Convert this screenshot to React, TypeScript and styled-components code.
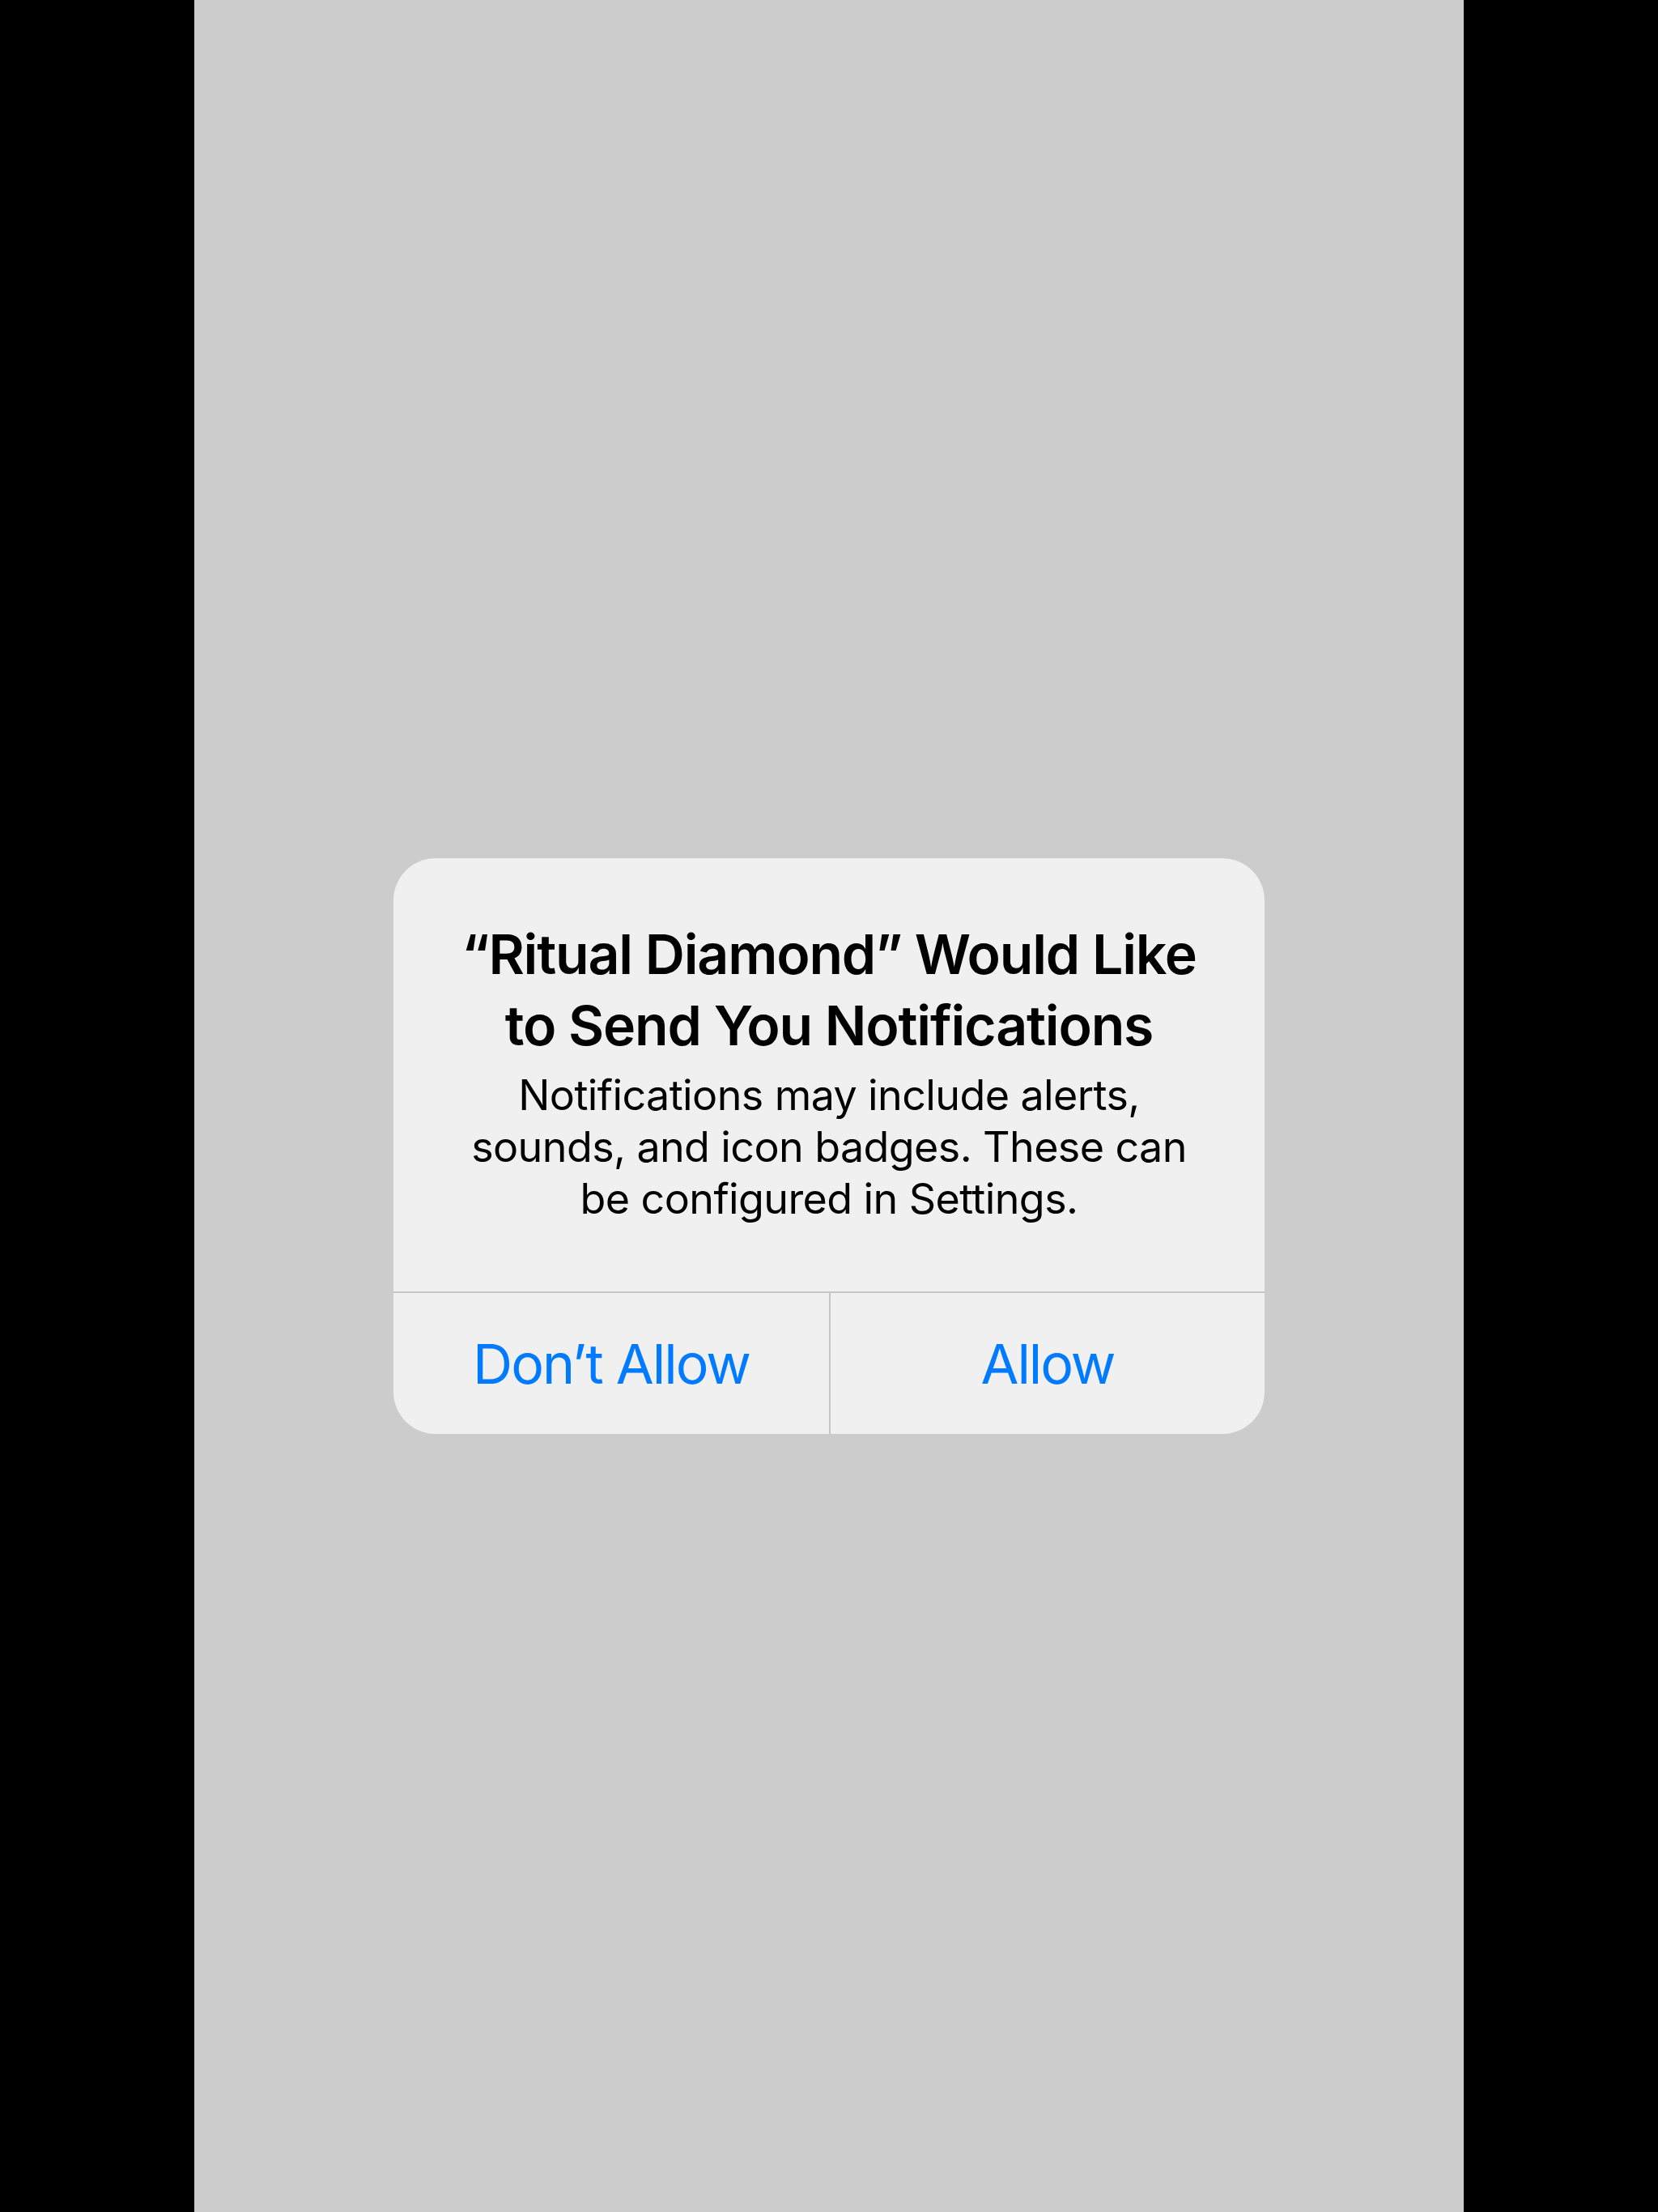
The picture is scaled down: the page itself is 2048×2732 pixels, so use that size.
import styled, { createGlobalStyle } from 'styled-components';

const GlobalStyle = createGlobalStyle`
	html, body {
		margin: 0;
		padding: 0;
		background: #000;
	}
	body {
		font-family: Inter, "Noto Sans", "Liberation Sans", sans-serif;
		-webkit-font-smoothing: antialiased;
	}
`;

const Frame = styled.div`
	width: 2048px;
	height: 2732px;
	background: #000;
	display: flex;
	justify-content: center;
`;

const Screen = styled.main`
	width: 1568px;
	height: 100%;
	box-sizing: border-box;
	padding-top: 99px;
	background: #cccccc;
	display: flex;
	align-items: center;
	justify-content: center;
`;

const Alert = styled.div`
	width: 1076px;
	background: #f0f0f0;
	border-radius: 52px;
	overflow: hidden;
	display: flex;
	flex-direction: column;
`;

const Content = styled.div`
	padding: 74px 40px 82px;
	display: flex;
	flex-direction: column;
	align-items: center;
	gap: 11px;
	text-align: center;
	color: #000;
`;

const Title = styled.h2`
	margin: 0;
	font-size: 68px;
	line-height: 88px;
	font-weight: 600;
	letter-spacing: -1.2px;
	white-space: nowrap;
`;

const Message = styled.p`
	margin: 0;
	font-size: 52px;
	line-height: 64px;
	font-weight: 400;
	letter-spacing: -0.6px;
	white-space: nowrap;
`;

const Actions = styled.div`
	display: grid;
	grid-template-columns: 1fr 1fr;
	border-top: 2px solid #c6c6c8;
`;

const Action = styled.button<{ $divider?: boolean }>`
	height: 174px;
	margin: 0;
	padding: 0;
	border: none;
	border-left: ${(p) => (p.$divider ? '2px solid #c6c6c8' : 'none')};
	background: transparent;
	color: #007aff;
	font-family: inherit;
	font-size: 68px;
	font-weight: 400;
	letter-spacing: -2px;
	cursor: pointer;
`;

export default function App() {
	return (
		<>
			<GlobalStyle />
			<Frame>
				<Screen>
					<Alert role="alertdialog">
						<Content>
							<Title>
								“Ritual Diamond” Would Like
								<br />
								to Send You Notifications
							</Title>
							<Message>
								Notifications may include alerts,
								<br />
								sounds, and icon badges. These can
								<br />
								be configured in Settings.
							</Message>
						</Content>
						<Actions>
							<Action>Don’t Allow</Action>
							<Action $divider>Allow</Action>
						</Actions>
					</Alert>
				</Screen>
			</Frame>
		</>
	);
}
